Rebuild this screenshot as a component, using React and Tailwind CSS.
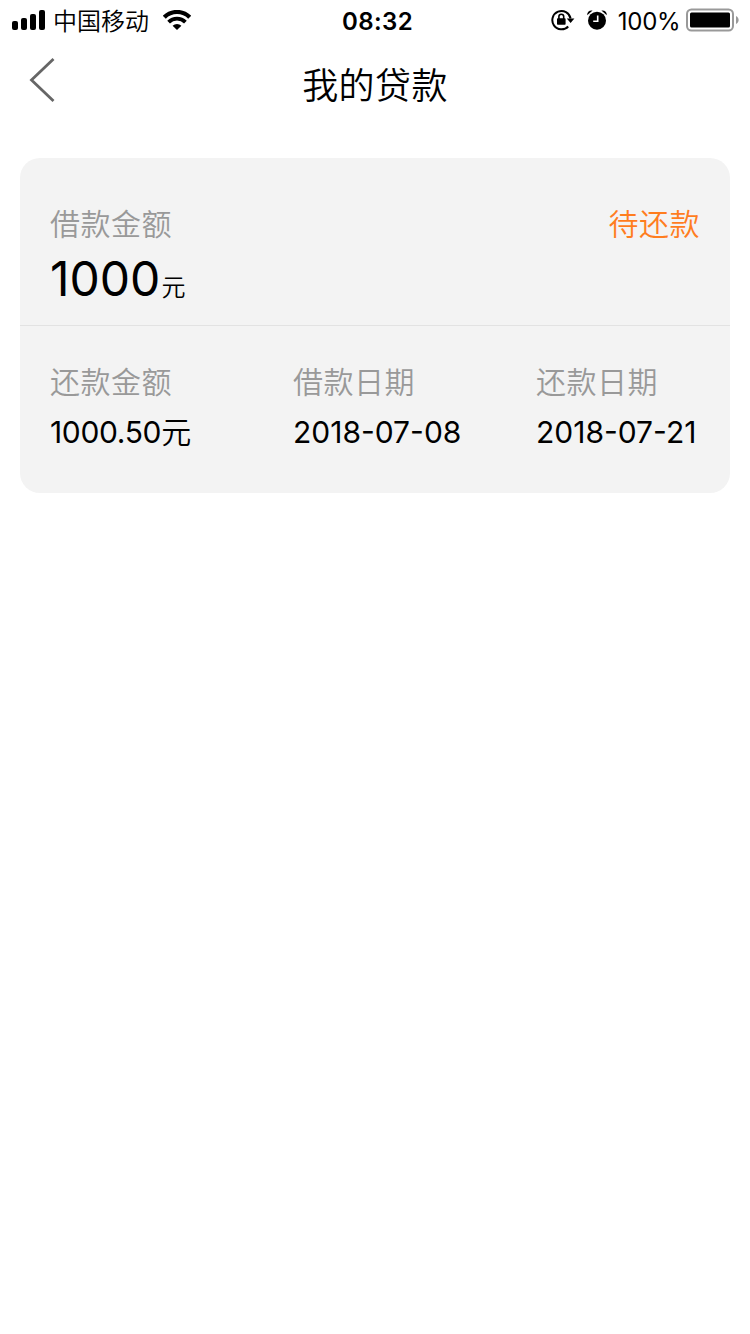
import React from "react";

const details = [
  { label: "还款金额", value: "1000.50", unit: "元" },
  { label: "借款日期", value: "2018-07-08" },
  { label: "还款日期", value: "2018-07-21" },
];

function SignalIcon() {
  return (
    <svg width="34" height="20" viewBox="0 0 34 20">
      <rect x="0" y="11" width="6" height="9" rx="2" />
      <rect x="9" y="8" width="6" height="12" rx="2" />
      <rect x="18" y="4" width="6" height="16" rx="2" />
      <rect x="27" y="0" width="6" height="20" rx="2" />
    </svg>
  );
}

function WifiIcon() {
  return (
    <svg width="28" height="20" viewBox="0 0 28 20" fill="none" stroke="black">
      <path d="M1.3 7.2a18 18 0 0 1 25.4 0" strokeWidth="4.2" />
      <path d="M5.6 12.2a11.8 11.8 0 0 1 16.8 0" strokeWidth="3.8" />
      <path d="M14 20l-4.4-4.2a6.2 6.2 0 0 1 8.8 0z" fill="black" stroke="none" />
    </svg>
  );
}

function RotationLockIcon() {
  return (
    <svg width="24" height="22" viewBox="0 0 24 22" fill="none" stroke="black">
      <path d="M17.2 17.5A9.2 9.2 0 1 1 19.6 9.5" strokeWidth="2" />
      <path d="M15.8 9.5h7.6l-3.8 4.5z" fill="black" stroke="none" />
      <rect x="6" y="9.2" width="8.6" height="6.6" rx="0.8" fill="black" stroke="none" />
      <path d="M7.9 10V7.6a2.4 2.4 0 0 1 4.8 0V10" strokeWidth="1.6" />
    </svg>
  );
}

function AlarmIcon() {
  return (
    <svg width="20" height="20" viewBox="0 0 20 20" fill="none">
      <circle cx="10" cy="10.7" r="9" fill="black" />
      <path d="M10.7 5.4v5.8H6.2" stroke="white" strokeWidth="1.6" />
      <path d="M0.2 5.2C0 2 2.2 0.2 5.6 0.6ZM14.4 0.6c3.4-0.4 5.6 1.4 5.4 4.6Z" fill="black" />
    </svg>
  );
}

function BatteryIcon() {
  return (
    <svg width="54" height="24" viewBox="0 0 54 24">
      <rect x="1" y="1.5" width="46" height="21" rx="4.5" fill="none" stroke="#999" strokeWidth="2" />
      <rect x="4" y="4.5" width="40" height="15" rx="1.5" />
      <path d="M50 8c3.5 1.8 3.5 6.2 0 8z" fill="#999" />
    </svg>
  );
}

function StatusBar() {
  return (
    <div className="flex h-10 items-center justify-between pl-3 pr-[10px]">
      <div className="flex w-[300px] items-center">
        <SignalIcon />
        <span className="ml-[7px] mr-[14px] mt-[3px] text-[24px] font-[350] leading-[37px]">中国移动</span>
        <WifiIcon />
      </div>
      <span className="ml-[3px] mt-[2px] text-[24px] font-semibold leading-[37px] tracking-[0.4px]">08:32</span>
      <div className="flex w-[300px] items-center justify-end">
        <RotationLockIcon />
        <span className="ml-3">
          <AlarmIcon />
        </span>
        <span className="ml-[11px] mr-[5.500px] mt-[2px] text-[24px] leading-[37px] tracking-[-0.2px]">100%</span>
        <BatteryIcon />
      </div>
    </div>
  );
}

function App() {
  return (
    <div className="min-h-screen bg-white font-['Inter','Noto_Sans_CJK_SC',sans-serif] text-black">
      <StatusBar />
      <header className="grid h-[88px] grid-cols-[100px_1fr_100px] items-center">
        <button className="pl-[29px]">
          <svg width="26" height="46" viewBox="0 0 26 46" fill="none" stroke="#666" strokeWidth="2.8" className="-mt-2">
            <path d="M24.5 2L2.5 23l22 21" />
          </svg>
        </button>
        <h1 className="pt-[3px] text-center text-[36px] font-[350] tracking-[0.4px]">我的贷款</h1>
      </header>
      <div className="mx-5 mt-[30px] h-[335px] rounded-[20px] bg-[#f3f3f3]">
        <div className="flex h-[168px] justify-between border-b border-[#e2e2e2] px-[30px] pt-11">
          <div>
            <div className="text-[30px] font-[350] leading-[45px] tracking-[0.5px] text-[#999]">借款金额</div>
            <div className="flex items-baseline text-[48px] leading-[64px]">
              1000
              <span className="ml-px mt-[2px] self-start pt-[7px] text-[24px] font-[350]">元</span>
            </div>
          </div>
          <div className="text-[30px] font-[350] leading-[45px] tracking-[0.5px] text-[#ff7d1e]">待还款</div>
        </div>
        <div className="grid grid-cols-[243px_243px_1fr] pl-[30px] pt-[34px]">
          {details.map((item) => (
            <div key={item.label}>
              <div className="text-[30px] font-[350] leading-[45px] tracking-[0.5px] text-[#999]">{item.label}</div>
              <div className={item.unit ? "mt-[5px] text-[30px] leading-[45px] tracking-[-0.35px]" : "mt-[5px] text-[30px] leading-[45px]"}>
                {item.value}
                {item.unit && <span className="font-[350]">{item.unit}</span>}
              </div>
            </div>
          ))}
        </div>
      </div>
    </div>
  );
}

export default App;
